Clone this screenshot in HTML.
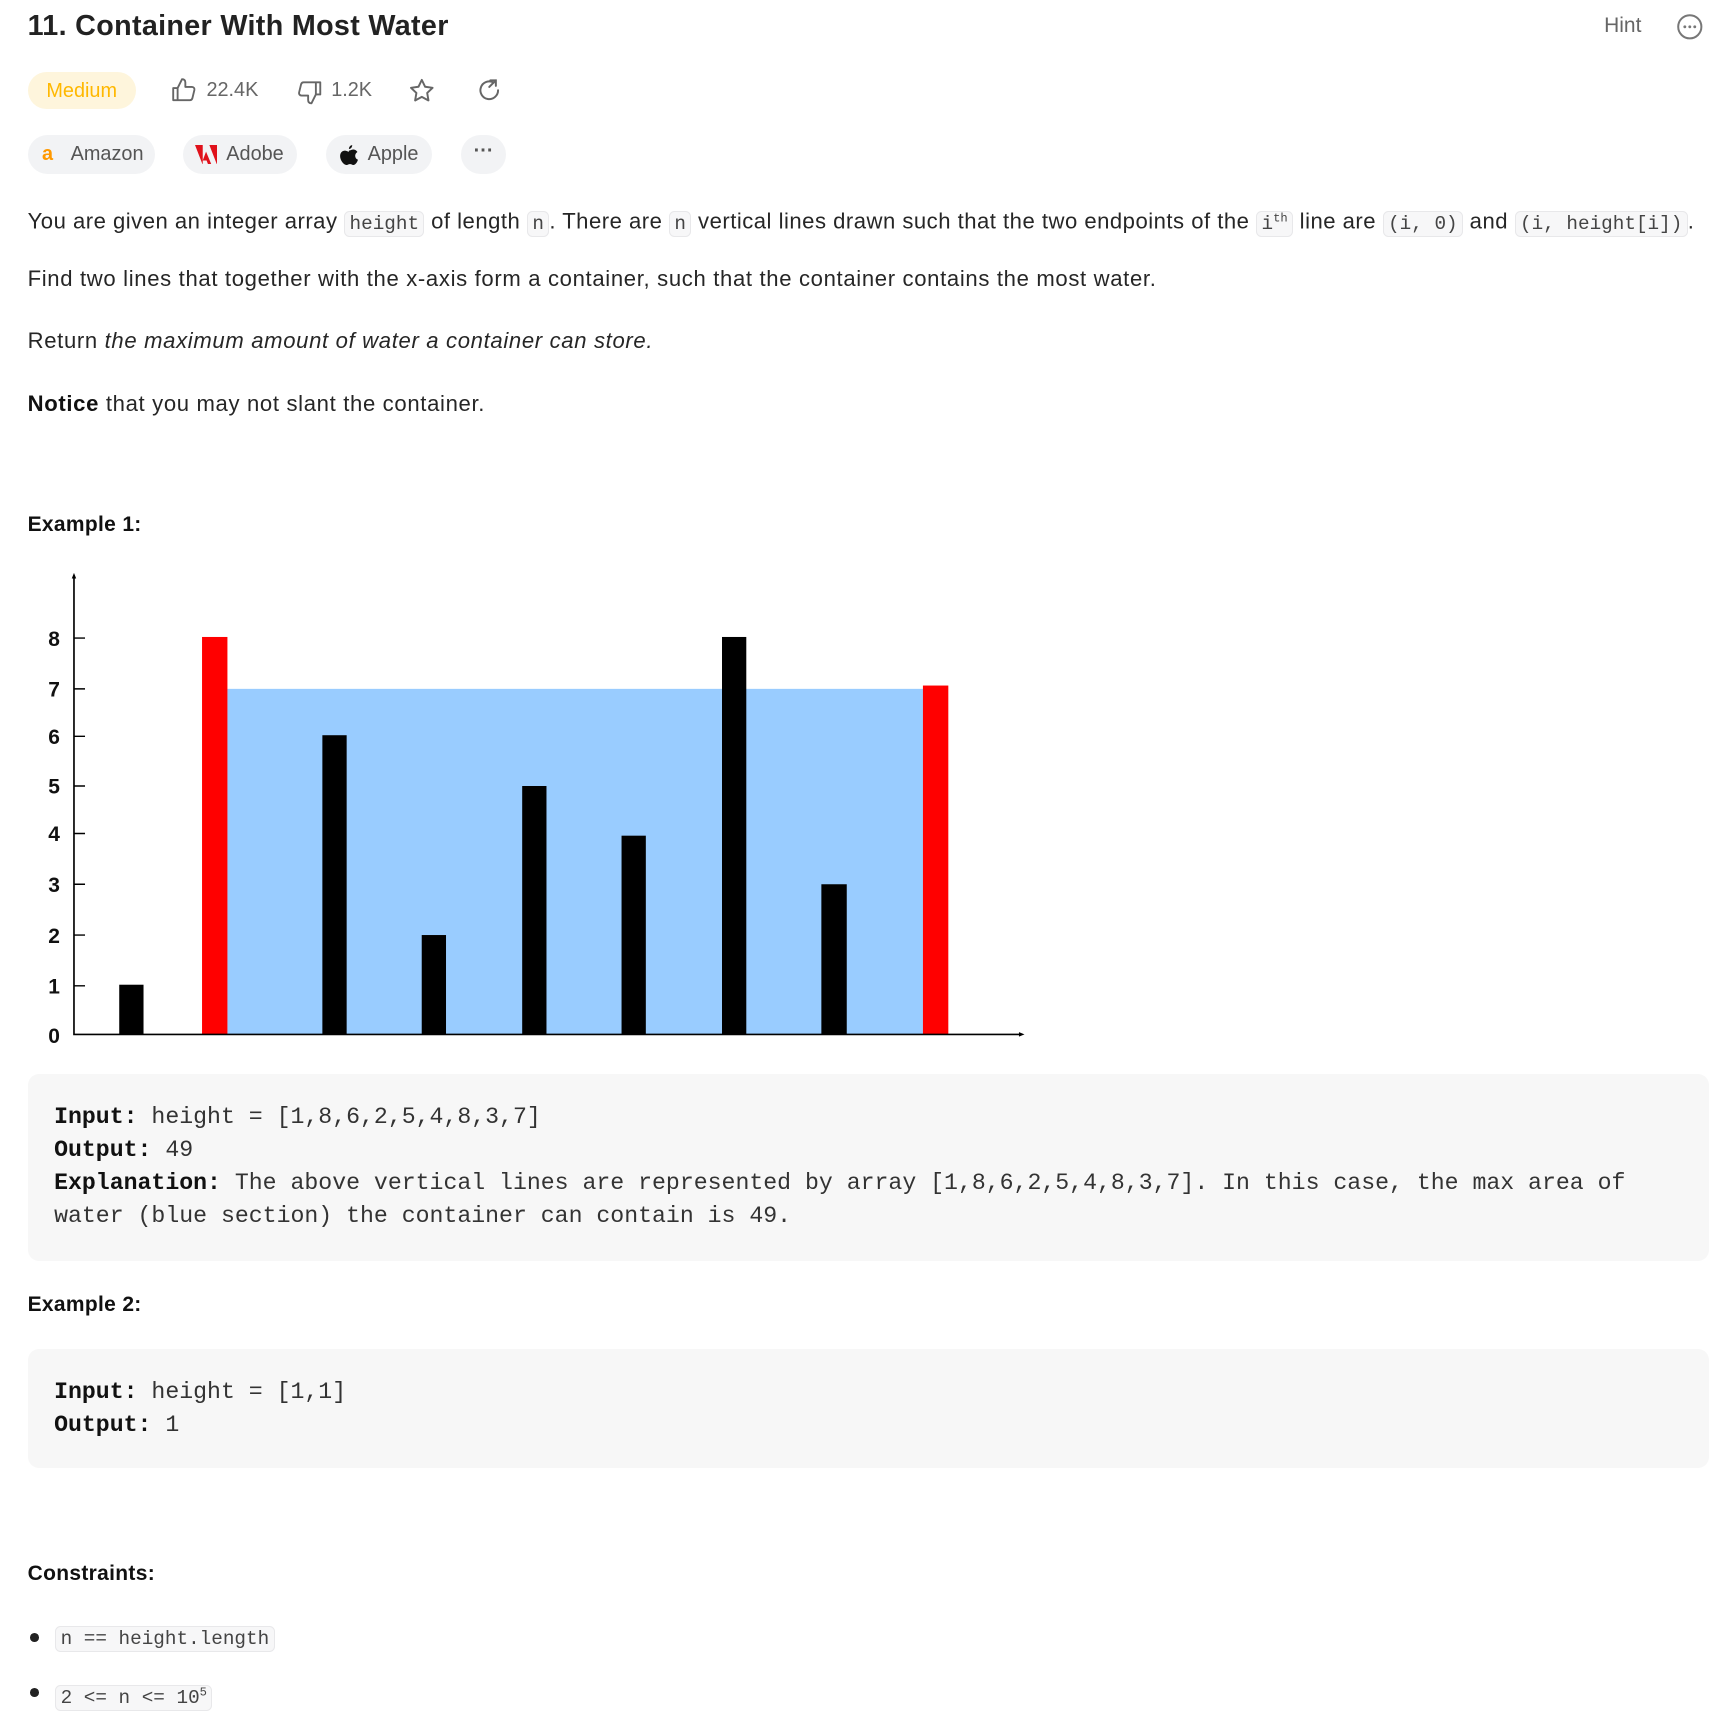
<!DOCTYPE html>
<html><head><meta charset="utf-8"><style>
html,body{margin:0;padding:0;background:#fff;}
body{width:1730px;height:1725px;overflow:hidden;}
#w{zoom:1.104;position:relative;width:1568px;height:1563px;font-family:"Liberation Sans",sans-serif;color:#262626;}
.a{position:absolute;white-space:nowrap;}
.t{font-size:20px;line-height:24px;letter-spacing:0.6px;}
code{font-family:"Liberation Mono",monospace;font-size:17.5px;letter-spacing:0;background:#f7f7f8;border:1px solid #e8e8ea;border-radius:5px;padding:1px 4px;color:#444;}
.pill{position:absolute;height:36px;border-radius:18px;background:#f2f3f5;font-size:18px;line-height:36px;color:#555;top:122px;}
.pre{position:absolute;left:25px;width:1523px;background:#f7f7f7;border-radius:10px;font-family:"Liberation Mono",monospace;font-size:21px;line-height:30px;color:#333;padding:0 24px;box-sizing:border-box;white-space:pre;}
.pre b{color:#111;}
h4{margin:0;font-size:19px;font-weight:bold;color:#111;position:absolute;left:25px;letter-spacing:0.3px;}
.ico{position:absolute;}
.bul{position:absolute;left:27px;width:8px;height:8px;border-radius:50%;background:#222;}
</style></head><body><div id="w">
<div class="a" style="left:25px;top:9px;font-size:26px;font-weight:bold;color:#222;letter-spacing:0.3px;">11. Container With Most Water</div>
<div class="a" style="left:1453px;top:13px;font-size:19px;color:#666;">Hint</div>
<svg class="ico" style="left:1518px;top:12px" width="25" height="25" viewBox="0 0 25 25"><circle cx="12.5" cy="12.5" r="10.5" fill="none" stroke="#777" stroke-width="1.8"/><circle cx="8" cy="12.5" r="1.3" fill="#777"/><circle cx="12.5" cy="12.5" r="1.3" fill="#777"/><circle cx="17" cy="12.5" r="1.3" fill="#777"/></svg>

<div class="a" style="left:25px;top:65px;width:98px;height:34px;border-radius:17px;background:#fef5dc;color:#ffb800;font-size:18px;line-height:36px;text-align:center;">Medium</div>
<svg class="ico" style="left:155px;top:70px" width="24" height="24" viewBox="0 0 24 24" fill="none" stroke="#666" stroke-width="1.7" stroke-linejoin="round"><path d="M2 10h4v11H2zM6 10l4-8c2 0 3 1 3 3v4h6c1.5 0 2.5 1.3 2.2 2.7l-1.8 7.5c-.3 1-1.2 1.8-2.3 1.8H6"/></svg>
<div class="a" style="left:187px;top:72px;font-size:18px;color:#666;">22.4K</div>
<svg class="ico" style="left:268px;top:72px" width="24" height="24" viewBox="0 0 24 24" fill="none" stroke="#666" stroke-width="1.7" stroke-linejoin="round"><path d="M22 14h-4V3h4zM18 14l-4 8c-2 0-3-1-3-3v-4H5c-1.5 0-2.5-1.3-2.2-2.7L4.6 4.8C4.9 3.8 5.8 3 6.9 3H18"/></svg>
<div class="a" style="left:300px;top:72px;font-size:18px;color:#666;">1.2K</div>
<svg class="ico" style="left:370px;top:70px" width="25" height="25" viewBox="0 0 24 24" fill="none" stroke="#666" stroke-width="1.7" stroke-linejoin="round"><path d="M12 2.5l2.9 6 6.5.9-4.7 4.5 1.1 6.5L12 17.3l-5.8 3.1 1.1-6.5L2.6 9.4l6.5-.9z"/></svg>
<svg class="ico" style="left:431px;top:70px" width="24" height="24" viewBox="0 0 24 24" fill="none" stroke="#666" stroke-width="1.8" stroke-linecap="round"><path d="M20 12a8 8 0 1 1-4-6.9"/><path d="M13 3h5v5M18 3l-6 6"/></svg>

<div class="pill" style="left:25px;width:115px;"><span style="position:absolute;left:13px;color:#f90;font-weight:bold;font-size:18px;">a</span><span style="position:absolute;left:39px">Amazon</span></div>
<div class="pill" style="left:166px;width:103px;"><svg style="position:absolute;left:11px;top:9px" width="20" height="18" viewBox="0 0 20 18"><path d="M0 0h7v18zM13 0h7v18zM10 6l5 12h-3l-1.5-4H7z" fill="#e0111b"/></svg><span style="position:absolute;left:39px">Adobe</span></div>
<div class="pill" style="left:295px;width:96px;"><svg style="position:absolute;left:12px;top:8px" width="18" height="20" viewBox="0 0 18 20"><path d="M12 1c0 2-1.5 3.5-3 3.5 0-2 1.5-3.5 3-3.5zM9 6c1.5 0 2.5-1 4-1 1.5 0 3 1 3.7 2.3-3 1.7-2.5 6 .5 7-.7 2.2-2.3 4.7-4 4.7-1.3 0-1.6-.8-3.2-.8-1.6 0-2 .8-3.3.8C4.5 19 1 15 1 11c0-3.3 2.2-5 4.3-5 1.4 0 2.5 1 3.7 1z" fill="#111"/></svg><span style="position:absolute;left:38px">Apple</span></div>
<div class="pill" style="left:418px;width:40px;text-align:center;line-height:30px;font-weight:bold;">···</div>

<div class="a t" style="left:25px;top:186px;letter-spacing:0.45px;">You are given an integer array <code>height</code> of length <code>n</code>. There are <code>n</code> vertical lines drawn such that the two endpoints of the <code>i<sup style="font-size:11px">th</sup></code> line are <code>(i, 0)</code> and <code>(i, height[i])</code>.</div>
<div class="a t" style="left:25px;top:241px;">Find two lines that together with the x-axis form a container, such that the container contains the most water.</div>
<div class="a t" style="left:25px;top:297px;">Return <i>the maximum amount of water a container can store.</i></div>
<div class="a t" style="left:25px;top:354px;"><b style="color:#111">Notice</b> that you may not slant the container.</div>

<h4 style="top:465px;">Example 1:</h4>
<svg class="ico" style="left:0;top:510px" width="940" height="445" viewBox="0 510 940 445">
<rect x="206" y="624" width="630" height="313" fill="#99ccff"/>
<g fill="#000"><rect x="108" y="892" width="22" height="45"/><rect x="292" y="666" width="22" height="271"/><rect x="382" y="847" width="22" height="90"/><rect x="473" y="712" width="22" height="225"/><rect x="563" y="757" width="22" height="180"/><rect x="654" y="577" width="22" height="360"/><rect x="744" y="801" width="23" height="136"/></g>
<rect x="183" y="577" width="23" height="360" fill="#f00"/><rect x="836" y="621" width="23" height="316" fill="#f00"/>
<path d="M67 522V937H925" stroke="#000" stroke-width="1.5" fill="none"/>
<path d="M67 519l-2 5h4zM928 937l-5-2v4z" fill="#000"/>
<g stroke="#000" stroke-width="1.3"><path d="M67 578h10M67 624h10M67 667h10M67 712h10M67 755h10M67 801h10M67 847h10M67 893h10"/></g>
<g font-family="Liberation Sans" font-size="19" font-weight="bold" fill="#111" text-anchor="middle"><text x="49" y="585">8</text><text x="49" y="631">7</text><text x="49" y="674">6</text><text x="49" y="719">5</text><text x="49" y="762">4</text><text x="49" y="808">3</text><text x="49" y="854">2</text><text x="49" y="900">1</text><text x="49" y="945">0</text></g>
</svg>

<div class="pre" style="top:973px;height:169px;padding-top:24px;"><b>Input:</b> height = [1,8,6,2,5,4,8,3,7]
<b>Output:</b> 49
<b>Explanation:</b> The above vertical lines are represented by array [1,8,6,2,5,4,8,3,7]. In this case, the max area of
water (blue section) the container can contain is 49.</div>

<h4 style="top:1171px;">Example 2:</h4>
<div class="pre" style="top:1222px;height:108px;padding-top:24px;"><b>Input:</b> height = [1,1]
<b>Output:</b> 1</div>

<h4 style="top:1415px;">Constraints:</h4>
<div class="bul" style="top:1479px;"></div>
<div class="a t" style="left:50px;top:1471px;"><code>n == height.length</code></div>
<div class="bul" style="top:1529px;"></div>
<div class="a t" style="left:50px;top:1521px;"><code>2 &lt;= n &lt;= 10<sup style="font-size:11px">5</sup></code></div>
</div></body></html>
